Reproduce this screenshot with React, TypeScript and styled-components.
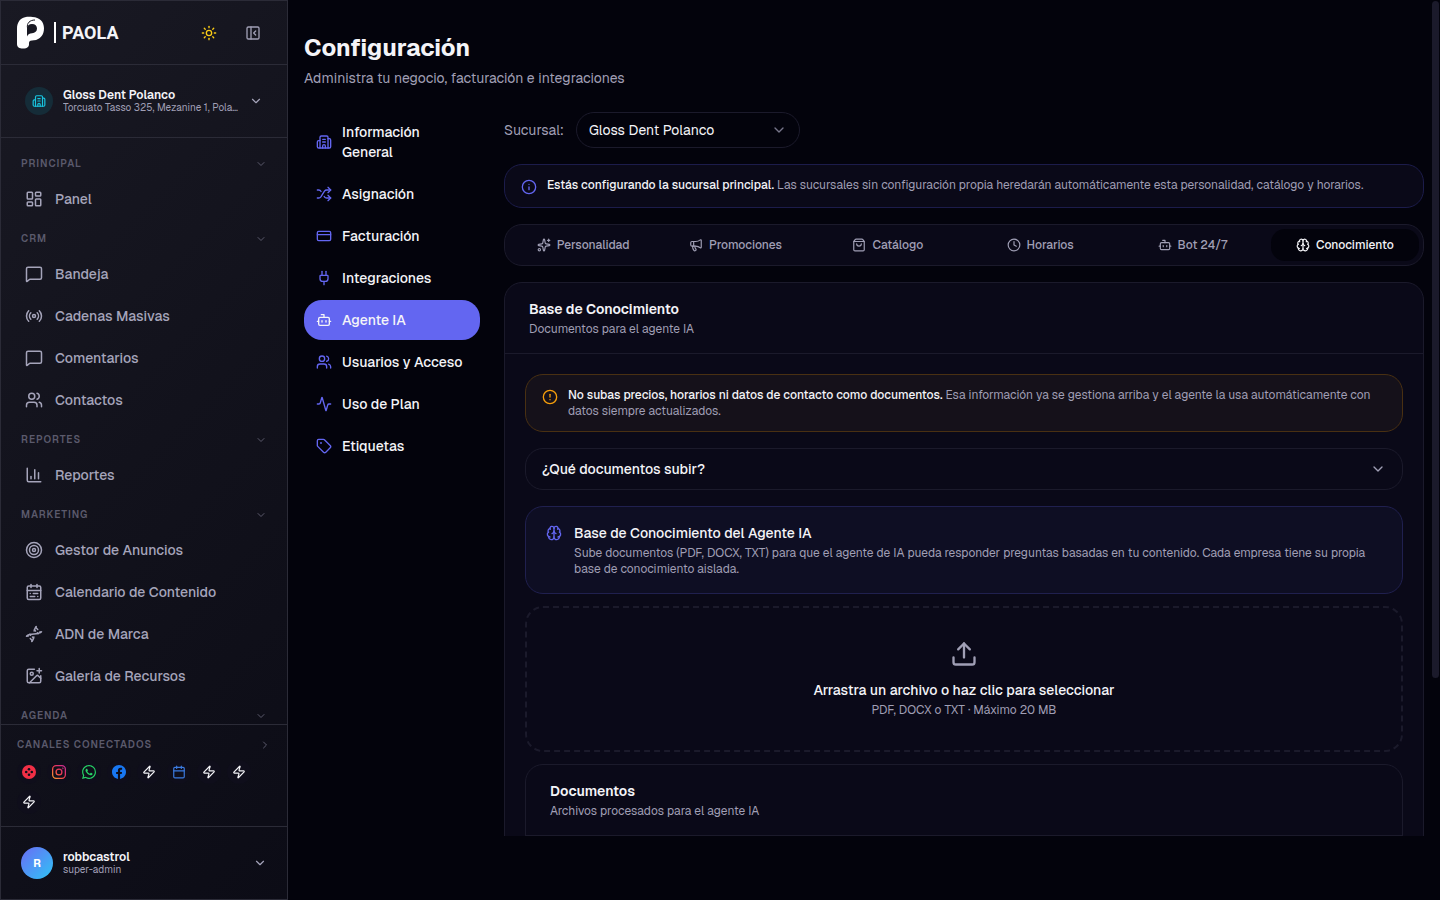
import React from "react";
import styled, { createGlobalStyle, css } from "styled-components";
import {
  Activity, Bot, Brain, Building2, Calendar, CalendarRange, ChartColumn, ChevronDown, ChevronRight,
  CircleAlert, Clock, CreditCard, Dna, ImagePlus, Info, LayoutDashboard, Megaphone, MessageSquare,
  PanelLeftClose, Plug, Radio, ShoppingBag, Shuffle, Sparkles, Sun, Tag, Target, Upload, Users, Zap,
} from "lucide-react";
import type { LucideIcon } from "lucide-react";

const c = {
  page: "#03030c",
  panel: "#0a0918",
  line: "#1b1a2b",
  sideLine: "#2b2b37",
  text: "#f4f4f8",
  muted: "#a09fb5",
  nav: "#a5a4ba",
  dim: "#5b5a6c",
  accent: "#6366f1",
};

const Global = createGlobalStyle`
  *, *::before, *::after { box-sizing: border-box; }
  body {
    margin: 0;
    background: ${c.page};
    color: ${c.text};
    font-family: Geist, Inter, "Liberation Sans", sans-serif;
    font-size: 14px;
    line-height: 20px;
    -webkit-font-smoothing: antialiased;
  }
  button, select, input { font: inherit; color: inherit; }
  button { background: none; border: 0; padding: 0; cursor: pointer; text-align: left; }
  a { color: inherit; text-decoration: none; }
  h1, h2, h3, p, ul { margin: 0; padding: 0; }
  ul { list-style: none; }
  svg { flex: none; display: block; }
`;

const Shell = styled.div`
  display: flex;
  height: 100vh;
  overflow: hidden;
`;

/* Sidebar */
const Sidebar = styled.aside`
  flex: none;
  width: 288px;
  display: flex;
  flex-direction: column;
  border: 1px solid ${c.sideLine};
  background: linear-gradient(135deg, #191923 0%, #12121c 50%, #0c0c16 100%);
`;

const Brand = styled.header`
  flex: none;
  display: flex;
  align-items: center;
  height: 64px;
  padding: 0 16px 0 15px;
  border-bottom: 1px solid ${c.sideLine};
`;

const BrandLink = styled.a`
  display: flex;
  align-items: center;
  gap: 9px;
  margin-right: auto;
`;

const BrandMark = styled.span`
  display: flex;
  align-items: center;
  gap: 6px;
`;

const BrandRule = styled.span`
  width: 2px;
  height: 21px;
  background: #ffffff;
`;

const BrandName = styled.span`
  font-family: Roboto, "Liberation Sans", sans-serif;
  font-size: 18px;
  line-height: 20px;
  font-weight: 700;
`;

const IconButton = styled.button<{ $tone: string }>`
  display: flex;
  align-items: center;
  justify-content: center;
  width: 36px;
  height: 36px;
  margin-left: 8px;
  color: ${(p) => p.$tone};
`;

const Account = styled.button<{ $wide?: boolean }>`
  display: flex;
  align-items: center;
  gap: 10px;
  width: 100%;
  height: 72px;
  padding: ${(p) => (p.$wide ? "0 20px" : "0 24px")};
`;

const AccountBox = styled.div<{ $edge: "top" | "bottom" }>`
  flex: none;
  border-${(p) => p.$edge}: 1px solid ${c.sideLine};
`;

const Badge = styled.span`
  flex: none;
  display: flex;
  align-items: center;
  justify-content: center;
  width: 28px;
  height: 28px;
  border-radius: 50%;
  background: #152c38;
  color: #18c5df;
`;

const Avatar = styled(Badge)`
  width: 32px;
  height: 32px;
  background: linear-gradient(135deg, #6a6cf5, #2fc4f5);
  color: #ffffff;
  font-size: 11px;
  font-weight: 700;
`;

const AccountText = styled.span`
  flex: 1;
  min-width: 0;
  display: flex;
  flex-direction: column;
`;

const AccountName = styled.span`
  font-size: 12px;
  line-height: 14px;
  font-weight: 600;
`;

const AccountNote = styled.span`
  overflow: hidden;
  font-size: 10px;
  line-height: 12px;
  color: ${c.muted};
  white-space: nowrap;
  text-overflow: ellipsis;
`;

const Nav = styled.nav`
  flex: 1;
  min-height: 0;
  overflow: hidden;
  padding: 16px 12px 0;
`;

const NavGroup = styled.section`
  margin-bottom: 10px;
`;

const GroupToggle = styled.button<{ $flush?: boolean }>`
  display: flex;
  align-items: center;
  justify-content: space-between;
  width: 100%;
  height: 19px;
  padding: ${(p) => (p.$flush ? "0" : "0 8px")};
  color: ${c.dim};
  font-size: 10px;
  font-weight: 600;
  letter-spacing: 1px;
  text-transform: uppercase;
`;

const NavList = styled.ul`
  display: flex;
  flex-direction: column;
  gap: 2px;
  padding-top: 6px;
`;

const NavLink = styled.a`
  display: flex;
  align-items: center;
  gap: 12px;
  height: 40px;
  padding: 0 12px;
  color: ${c.nav};
  font-weight: 500;
`;

const Channels = styled.section`
  flex: none;
  height: 102px;
  padding: 10px 16px 0;
  border-top: 1px solid ${c.sideLine};
`;

const ChannelList = styled.ul`
  display: flex;
  flex-wrap: wrap;
  gap: 6px;
  padding-top: 6px;
`;

const Channel = styled.li<{ $tone: string }>`
  display: flex;
  align-items: center;
  justify-content: center;
  width: 24px;
  height: 24px;
  border-radius: 50%;
  background: #0f0e1b;
  color: ${(p) => p.$tone};
`;

/* Main column */
const Main = styled.main`
  flex: 1;
  min-width: 0;
  display: flex;
  flex-direction: column;
  padding: 32px 8px 64px 16px;
`;

const Title = styled.h1`
  font-size: 24px;
  line-height: 32px;
  font-weight: 700;
`;

const Subtitle = styled.p`
  margin-top: 4px;
  color: ${c.muted};
`;

const Columns = styled.div`
  flex: 1;
  min-height: 0;
  display: flex;
  gap: 24px;
  margin-top: 24px;
`;

const SettingsNav = styled.nav`
  flex: none;
  width: 176px;
  display: flex;
  flex-direction: column;
  gap: 2px;
`;

const SettingsLink = styled.a<{ $active?: boolean }>`
  display: flex;
  align-items: center;
  gap: 10px;
  padding: 10px 12px;
  border-radius: 18px;
  font-weight: 500;
  ${(p) => p.$active && css`background: ${c.accent};`}
  svg { color: ${(p) => (p.$active ? c.text : c.accent)}; }
`;

const Content = styled.div`
  flex: 1;
  min-width: 0;
  overflow: hidden;
  display: flex;
  flex-direction: column;
  gap: 16px;
  & > * { flex: none; }
`;

const BranchRow = styled.div`
  display: flex;
  align-items: center;
  gap: 12px;
  color: ${c.muted};
`;

const SelectBox = styled.div`
  display: grid;
  align-items: center;
  width: 224px;
  & > * { grid-area: 1 / 1; }
  svg { justify-self: end; margin-right: 13px; color: #77768a; pointer-events: none; }
`;

const Select = styled.select`
  width: 100%;
  height: 36px;
  padding: 0 12px;
  border: 1px solid ${c.line};
  border-radius: 18px;
  background: transparent;
  color: ${c.text};
  appearance: none;
`;

const tones = {
  info: css`background: #0a0918; border-color: #1c1c4b;`,
  warn: css`background: #15111a; border-color: #493012;`,
  brand: css`background: #0e0e23; border-color: #20204f;`,
};

const Notice = styled.div<{ $tone: keyof typeof tones; $roomy?: boolean }>`
  display: flex;
  align-items: flex-start;
  gap: ${(p) => (p.$roomy ? "12px" : "10px")};
  padding: ${(p) => (p.$roomy ? "16px 20px" : "12px 16px")};
  border: 1px solid;
  border-radius: 18px;
  font-size: 12px;
  line-height: 16px;
  color: ${c.muted};
  ${(p) => tones[p.$tone]}
  svg { margin-top: 2px; color: ${(p) => (p.$tone === "warn" ? "#f59e0b" : c.accent)}; }
  strong { font-weight: 500; color: ${c.text}; }
`;

const NoticeTitle = styled.h3`
  margin-bottom: 2px;
  font-size: 14px;
  line-height: 20px;
  font-weight: 500;
  color: ${c.text};
`;

const InfoNotice = styled(Notice)`
  min-height: 44px;
`;

const Tabs = styled.div`
  display: grid;
  grid-template-columns: repeat(6, 1fr);
  gap: 4px;
  height: 42px;
  padding: 4px;
  border: 1px solid ${c.line};
  border-radius: 18px;
  background: ${c.panel};
`;

const Tab = styled.button<{ $active?: boolean }>`
  display: flex;
  align-items: center;
  justify-content: center;
  gap: 6px;
  border-radius: 14px;
  font-size: 12px;
  line-height: 16px;
  font-weight: 500;
  color: ${(p) => (p.$active ? c.text : c.muted)};
  background: ${(p) => (p.$active ? c.page : "transparent")};
`;

const Card = styled.section`
  border: 1px solid ${c.line};
  border-radius: 18px;
  background: ${c.panel};
`;

const CardHead = styled.header`
  padding: 16px 24px;
  border-bottom: 1px solid ${c.line};
`;

const CardTitle = styled.h2`
  font-size: 14px;
  line-height: 20px;
  font-weight: 600;
`;

const Small = styled.p`
  margin-top: 2px;
  font-size: 12px;
  line-height: 16px;
  color: ${c.muted};
`;

const CardBody = styled.div`
  display: flex;
  flex-direction: column;
  gap: 16px;
  padding: 20px;
`;

const Stack = styled.div`
  display: flex;
  flex-direction: column;
  gap: 12px;
`;

const Disclosure = styled.button`
  display: flex;
  align-items: center;
  justify-content: space-between;
  height: 42px;
  padding: 0 16px;
  border: 1px solid ${c.line};
  border-radius: 18px;
  font-weight: 500;
  svg { color: ${c.muted}; }
`;

const DropZone = styled.button`
  display: flex;
  flex-direction: column;
  align-items: center;
  padding: 32px 24px;
  border: 2px dashed ${c.line};
  border-radius: 18px;
  svg { margin-bottom: 12px; color: ${c.muted}; }
`;

const DropTitle = styled.span`
  font-weight: 500;
`;

const ScrollTrack = styled.div`
  flex: none;
  width: 8px;
  padding: 1px 1px 0 0;
`;

const ScrollThumb = styled.div`
  height: 75.3%;
  border-radius: 4px;
  background: #1b1a2b;
`;

const Logo = () => (
  <svg width="29" height="33" viewBox="0 0 29 33" aria-hidden="true">
    <path fill="#fff" d="M1 28V12.5C1 6 4.5 2.3 9 1.2 11 .7 14 .8 16.5.9 23.5 1.2 28 5.5 28 12.200 28 19 24 23.6 18 24.3c-3 .3-4.800.5-5 2.500-.1 1.500.3 2.500-.6 3.800-1.200 1.700-3.400 2-5.600 2C3.500 32.600 1 31.300 1 28Z" />
    <path fill="#181822" d="M11 20.500V12.500C11 9.500 13 8 16 8c3.200 0 5 1.800 5 4.500 0 2.800-2 4.500-5 4.700-2.200.1-4 1-5 3.300Z" />
    <path fill="none" stroke="#181822" strokeWidth="1" d="M11.500 12C10.500 7 14 4 19 4" />
  </svg>
);

const Wheel = () => (
  <svg width="14" height="14" viewBox="0 0 14 14" aria-hidden="true">
    <circle cx="7" cy="7" r="7" fill="#f22f46" />
    <g fill="#0f0e1b">
      <circle cx="7" cy="4.2" r="1.3" /><circle cx="7" cy="9.8" r="1.3" />
      <circle cx="4.2" cy="7" r="1.3" /><circle cx="9.8" cy="7" r="1.3" />
    </g>
  </svg>
);

const Instagram = () => (
  <svg width="14" height="14" viewBox="0 0 24 24" fill="none" stroke="url(#ig)" strokeWidth="2.2" aria-hidden="true">
    <defs>
      <linearGradient id="ig" x1="0" y1="24" x2="24" y2="0" gradientUnits="userSpaceOnUse">
        <stop offset="0" stopColor="#fca92e" /><stop offset=".5" stopColor="#ef3a4f" /><stop offset="1" stopColor="#c32aa3" />
      </linearGradient>
    </defs>
    <rect x="1.1" y="1.1" width="21.8" height="21.8" rx="6" />
    <circle cx="12" cy="12" r="5" />
    <circle cx="18.4" cy="5.6" r=".4" />
  </svg>
);

const WhatsApp = () => (
  <svg width="14" height="14" viewBox="0 0 24 24" fill="#25d366" aria-hidden="true">
    <path d="M17.472 14.382c-.297-.149-1.758-.867-2.03-.967-.273-.099-.471-.148-.67.15-.197.297-.767.966-.94 1.164-.173.199-.347.223-.644.075-.297-.15-1.255-.463-2.39-1.475-.883-.788-1.48-1.761-1.653-2.059-.173-.297-.018-.458.13-.606.134-.133.298-.347.446-.52.149-.174.198-.298.298-.497.099-.198.05-.371-.025-.52-.075-.149-.669-1.612-.916-2.207-.242-.579-.487-.5-.669-.51-.173-.008-.371-.01-.57-.01-.198 0-.52.074-.792.372-.272.297-1.04 1.016-1.04 2.479 0 1.462 1.065 2.875 1.213 3.074.149.198 2.096 3.2 5.077 4.487.709.306 1.262.489 1.694.625.712.227 1.36.195 1.871.118.571-.085 1.758-.719 2.006-1.413.248-.694.248-1.289.173-1.413-.074-.124-.272-.198-.57-.347m-5.421 7.403h-.004a9.87 9.87 0 01-5.031-1.378l-.361-.214-3.741.982.998-3.648-.235-.374a9.86 9.86 0 01-1.51-5.26c.001-5.45 4.436-9.884 9.888-9.884 2.64 0 5.122 1.03 6.988 2.898a9.825 9.825 0 012.893 6.994c-.003 5.45-4.437 9.884-9.885 9.884m8.413-18.297A11.815 11.815 0 0012.05 0C5.495 0 .16 5.335.157 11.892c0 2.096.547 4.142 1.588 5.945L.057 24l6.305-1.654a11.882 11.882 0 005.683 1.448h.005c6.554 0 11.89-5.335 11.893-11.893a11.821 11.821 0 00-3.48-8.413z" />
  </svg>
);

const Facebook = () => (
  <svg width="14" height="14" viewBox="0 0 24 24" fill="#1877f2" aria-hidden="true">
    <path d="M24 12.073c0-6.627-5.373-12-12-12s-12 5.373-12 12c0 5.99 4.388 10.954 10.125 11.854v-8.385H7.078v-3.47h3.047V9.43c0-3.007 1.792-4.669 4.533-4.669 1.312 0 2.686.235 2.686.235v2.953H15.83c-1.491 0-1.956.925-1.956 1.874v2.25h3.328l-.532 3.47h-2.796v8.385C19.612 23.027 24 18.062 24 12.073z" />
  </svg>
);

const groups: { label: string; items: [string, LucideIcon][] }[] = [
  { label: "Principal", items: [["Panel", LayoutDashboard]] },
  { label: "CRM", items: [["Bandeja", MessageSquare], ["Cadenas Masivas", Radio], ["Comentarios", MessageSquare], ["Contactos", Users]] },
  { label: "Reportes", items: [["Reportes", ChartColumn]] },
  { label: "Marketing", items: [["Gestor de Anuncios", Target], ["Calendario de Contenido", CalendarRange], ["ADN de Marca", Dna], ["Galería de Recursos", ImagePlus]] },
  { label: "Agenda", items: [] },
];

const settings: [string, LucideIcon][] = [
  ["Información General", Building2], ["Asignación", Shuffle], ["Facturación", CreditCard], ["Integraciones", Plug],
  ["Agente IA", Bot], ["Usuarios y Acceso", Users], ["Uso de Plan", Activity], ["Etiquetas", Tag],
];

const tabs: [string, LucideIcon][] = [
  ["Personalidad", Sparkles], ["Promociones", Megaphone], ["Catálogo", ShoppingBag],
  ["Horarios", Clock], ["Bot 24/7", Bot], ["Conocimiento", Brain],
];

const channels: [string, string, React.ReactNode][] = [
  ["Twilio", "#f22f46", <Wheel />], ["Instagram", "#ef3a4f", <Instagram />], ["WhatsApp", "#25d366", <WhatsApp />],
  ["Facebook", "#1877f2", <Facebook />], ["Automatización", c.text, <Zap size={14} />], ["Calendario", "#3b7be0", <Calendar size={14} />],
  ["Automatización", c.text, <Zap size={14} />], ["Automatización", c.text, <Zap size={14} />], ["Automatización", c.text, <Zap size={14} />],
];

export default function App() {
  return (
    <Shell>
      <Global />
      <Sidebar>
        <Brand>
          <BrandLink href="#" aria-label="Paola">
            <Logo />
            <BrandMark>
              <BrandRule />
              <BrandName>PAOLA</BrandName>
            </BrandMark>
          </BrandLink>
          <IconButton $tone="#facc15" aria-label="Cambiar tema"><Sun size={16} /></IconButton>
          <IconButton $tone={c.muted} aria-label="Contraer menú"><PanelLeftClose size={16} /></IconButton>
        </Brand>
        <AccountBox $edge="bottom">
          <Account>
            <Badge><Building2 size={14} /></Badge>
            <AccountText>
              <AccountName>Gloss Dent Polanco</AccountName>
              <AccountNote>Torcuato Tasso 325, Mezanine 1, Polanco</AccountNote>
            </AccountText>
            <ChevronDown size={14} color={c.nav} />
          </Account>
        </AccountBox>
        <Nav>
          {groups.map((g) => (
            <NavGroup key={g.label}>
              <GroupToggle>{g.label}<ChevronDown size={12} /></GroupToggle>
              <NavList>
                {g.items.map(([label, Icon]) => (
                  <li key={label}><NavLink href="#"><Icon size={18} />{label}</NavLink></li>
                ))}
              </NavList>
            </NavGroup>
          ))}
        </Nav>
        <Channels>
          <GroupToggle $flush>Canales conectados<ChevronRight size={12} /></GroupToggle>
          <ChannelList>
            {channels.map(([label, tone, icon], i) => (
              <Channel key={i} $tone={tone} aria-label={label}>{icon}</Channel>
            ))}
          </ChannelList>
        </Channels>
        <AccountBox $edge="top">
          <Account $wide>
            <Avatar>R</Avatar>
            <AccountText>
              <AccountName>robbcastrol</AccountName>
              <AccountNote>super-admin</AccountNote>
            </AccountText>
            <ChevronDown size={14} color={c.nav} />
          </Account>
        </AccountBox>
      </Sidebar>
      <Main>
        <Title>Configuración</Title>
        <Subtitle>Administra tu negocio, facturación e integraciones</Subtitle>
        <Columns>
          <SettingsNav>
            {settings.map(([label, Icon]) => (
              <SettingsLink key={label} href="#" $active={label === "Agente IA"}><Icon size={16} />{label}</SettingsLink>
            ))}
          </SettingsNav>
          <Content>
            <BranchRow>
              <label htmlFor="branch">Sucursal:</label>
              <SelectBox>
                <Select id="branch"><option>Gloss Dent Polanco</option></Select>
                <ChevronDown size={16} />
              </SelectBox>
            </BranchRow>
            <InfoNotice $tone="info">
              <Info size={16} />
              <p><strong>Estás configurando la sucursal principal.</strong> Las sucursales sin configuración propia heredarán automáticamente esta personalidad, catálogo y horarios.</p>
            </InfoNotice>
            <Tabs role="tablist">
              {tabs.map(([label, Icon]) => (
                <Tab key={label} role="tab" aria-selected={label === "Conocimiento"} $active={label === "Conocimiento"}>
                  <Icon size={14} />{label}
                </Tab>
              ))}
            </Tabs>
            <Card>
              <CardHead>
                <CardTitle>Base de Conocimiento</CardTitle>
                <Small>Documentos para el agente IA</Small>
              </CardHead>
              <CardBody>
                <Notice $tone="warn">
                  <CircleAlert size={16} />
                  <p><strong>No subas precios, horarios ni datos de contacto como documentos.</strong> Esa información ya se gestiona arriba y el agente la usa automáticamente con datos siempre actualizados.</p>
                </Notice>
                <Disclosure aria-expanded="false">¿Qué documentos subir?<ChevronDown size={16} /></Disclosure>
                <Stack>
                  <Notice $tone="brand" $roomy>
                    <Brain size={16} />
                    <div>
                      <NoticeTitle>Base de Conocimiento del Agente IA</NoticeTitle>
                      <p>Sube documentos (PDF, DOCX, TXT) para que el agente de IA pueda responder preguntas basadas en tu contenido. Cada empresa tiene su propia base de conocimiento aislada.</p>
                    </div>
                  </Notice>
                  <DropZone>
                    <Upload size={28} />
                    <DropTitle>Arrastra un archivo o haz clic para seleccionar</DropTitle>
                    <Small as="span">PDF, DOCX o TXT · Máximo 20 MB</Small>
                  </DropZone>
                  <Card>
                    <CardHead>
                      <CardTitle>Documentos</CardTitle>
                      <Small>Archivos procesados para el agente IA</Small>
                    </CardHead>
                    <CardBody />
                  </Card>
                </Stack>
              </CardBody>
            </Card>
          </Content>
        </Columns>
      </Main>
      <ScrollTrack><ScrollThumb /></ScrollTrack>
    </Shell>
  );
}
